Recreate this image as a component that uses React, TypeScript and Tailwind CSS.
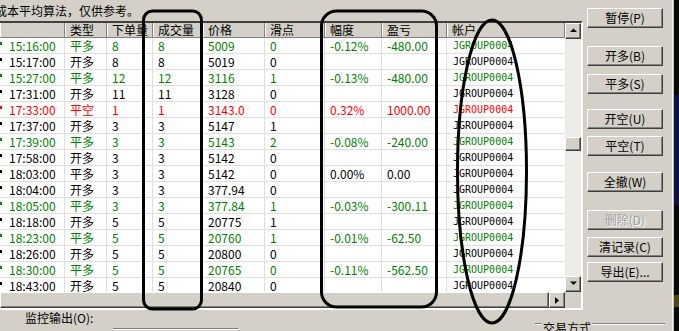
import React from 'react';

type Tone = 'g' | 'k' | 'r';

interface Trade {
  time: string;
  kind: string;
  ordered: string;
  filled: string;
  price: string;
  slip: string;
  pct: string;
  pnl: string;
  tone: Tone;
}

const trades: Trade[] = [
  { time: '15:16:00', kind: '平多', ordered: '8', filled: '8', price: '5009', slip: '0', pct: '-0.12%', pnl: '-480.00', tone: 'g' },
  { time: '15:17:00', kind: '开多', ordered: '8', filled: '8', price: '5019', slip: '0', pct: '', pnl: '', tone: 'k' },
  { time: '15:27:00', kind: '平多', ordered: '12', filled: '12', price: '3116', slip: '1', pct: '-0.13%', pnl: '-480.00', tone: 'g' },
  { time: '17:31:00', kind: '开多', ordered: '11', filled: '11', price: '3128', slip: '0', pct: '', pnl: '', tone: 'k' },
  { time: '17:33:00', kind: '平空', ordered: '1', filled: '1', price: '3143.0', slip: '0', pct: '0.32%', pnl: '1000.00', tone: 'r' },
  { time: '17:37:00', kind: '开多', ordered: '3', filled: '3', price: '5147', slip: '1', pct: '', pnl: '', tone: 'k' },
  { time: '17:39:00', kind: '平多', ordered: '3', filled: '3', price: '5143', slip: '2', pct: '-0.08%', pnl: '-240.00', tone: 'g' },
  { time: '17:58:00', kind: '开多', ordered: '3', filled: '3', price: '5142', slip: '0', pct: '', pnl: '', tone: 'k' },
  { time: '18:03:00', kind: '平多', ordered: '3', filled: '3', price: '5142', slip: '0', pct: '0.00%', pnl: '0.00', tone: 'k' },
  { time: '18:04:00', kind: '开多', ordered: '3', filled: '3', price: '377.94', slip: '0', pct: '', pnl: '', tone: 'k' },
  { time: '18:05:00', kind: '平多', ordered: '3', filled: '3', price: '377.84', slip: '1', pct: '-0.03%', pnl: '-300.11', tone: 'g' },
  { time: '18:18:00', kind: '开多', ordered: '5', filled: '5', price: '20775', slip: '1', pct: '', pnl: '', tone: 'k' },
  { time: '18:23:00', kind: '平多', ordered: '5', filled: '5', price: '20760', slip: '1', pct: '-0.01%', pnl: '-62.50', tone: 'g' },
  { time: '18:26:00', kind: '开多', ordered: '5', filled: '5', price: '20800', slip: '0', pct: '', pnl: '', tone: 'k' },
  { time: '18:30:00', kind: '平多', ordered: '5', filled: '5', price: '20765', slip: '0', pct: '-0.11%', pnl: '-562.50', tone: 'g' },
  { time: '18:43:00', kind: '开多', ordered: '5', filled: '5', price: '20840', slip: '0', pct: '', pnl: '', tone: 'k' },
];

const toneClass: Record<Tone, string> = {
  g: 'text-[#008000]',
  k: 'text-black',
  r: 'text-[#ff0000]',
};

// column widths: time, 类型, 下单量, 成交量, 价格, 滑点, 幅度, 盈亏, 帐户
const colW = ['w-[65px]', 'w-[42px]', 'w-[46px]', 'w-[50px]', 'w-[62px]', 'w-[60px]', 'w-[57px]', 'w-[65px]', 'w-[118px]'];
const headers = ['', '类型', '下单量', '成交量', '价格', '滑点', '幅度', '盈亏', '帐户'];

const raised =
  'bg-[#d4d0c8] border border-t-white border-l-white border-r-[#404040] border-b-[#404040] shadow-[inset_-1px_-1px_0_#808080]';

function Arrow({ dir }: { dir: 'up' | 'down' | 'right' }) {
  const pts = dir === 'up' ? '0,4 7,4 3.5,0.5' : dir === 'down' ? '0,0.5 7,0.5 3.5,4' : '1,0 5,3.5 1,7';
  return (
    <svg width="7" height="7" viewBox="0 0 7 7" className="block">
      <polygon points={pts} fill="#000" />
    </svg>
  );
}

function Btn({ label, mt, disabled }: { label: string; mt: string; disabled?: boolean }) {
  return (
    <div className={`${mt} h-[20px] w-[76px] flex items-center justify-center ${raised}`}>
      <span
        className={`text-[12px] leading-[14px] ${disabled ? 'text-[#a0a0a0] [text-shadow:1px_1px_0_#ffffff]' : 'text-black'}`}
      >
        {label}
      </span>
    </div>
  );
}

export default function App() {
  return (
    <div className="relative w-[679px] h-[331px] overflow-hidden bg-[#d4d0c8] flex font-['Noto_Sans_CJK_SC',sans-serif] text-[12px] text-black">
      <div className="w-[672px] flex flex-col">
        <div className="h-[310px] flex">
          {/* left: note + list view */}
          <div className="w-[583px] flex flex-col">
            <div className="h-[21px] pt-[4px] ml-[-5px] leading-[14px] whitespace-nowrap">成本平均算法，仅供参考。</div>

            <div className="h-[289px] flex flex-col border-t-2 border-t-[#404040] border-r-2 border-r-white border-b-2 border-b-white">
              <div className="h-[269px] flex">
                <div className="w-[565px] flex flex-col overflow-hidden bg-white">
                  <div className="h-[15px] flex shrink-0 bg-[#d4d0c8] border-b border-b-[#808080]">
                    {headers.map((h, i) => (
                      <div
                        key={i}
                        className={`${colW[i]} shrink-0 pl-[5px] leading-[14px] whitespace-nowrap overflow-hidden border-r border-r-[#808080] shadow-[inset_1px_0_0_#ffffff]`}
                      >
                        {h}
                      </div>
                    ))}
                  </div>
                  {trades.map((t, r) => {
                    const cells = [t.kind, t.ordered, t.filled, t.price, t.slip, t.pct, t.pnl];
                    return (
                      <div key={r} className={`h-[16px] flex shrink-0 ${toneClass[t.tone]}`}>
                        <div className={`${colW[0]} shrink-0 flex items-center border-r border-b border-[#dedede]`}>
                          <span className="w-[2px] h-[3px] bg-current mb-[5px]" />
                          <span className="ml-[7px] leading-[15px] whitespace-nowrap">{t.time}</span>
                        </div>
                        {cells.map((c, i) => (
                          <div
                            key={i}
                            className={`${colW[i + 1]} shrink-0 pl-[5px] leading-[15px] whitespace-nowrap overflow-hidden border-r border-b border-[#dedede]`}
                          >
                            {c}
                          </div>
                        ))}
                        <div className={`${colW[8]} shrink-0 pl-[6px] font-['DejaVu_Sans_Mono',monospace] text-[10px] leading-[15px] whitespace-nowrap border-b border-[#dedede]`}>
                          JGROUP0004
                        </div>
                      </div>
                    );
                  })}
                </div>

                {/* vertical scrollbar */}
                <div className="w-[16px] flex flex-col bg-[#ecebe8]">
                  <div className={`h-[16px] flex items-center justify-center ${raised}`}>
                    <Arrow dir="up" />
                  </div>
                  <div className="h-[98px]" />
                  <div className={`h-[14px] ${raised}`} />
                  <div className="flex-1" />
                  <div className={`h-[16px] flex items-center justify-center ${raised}`}>
                    <Arrow dir="down" />
                  </div>
                </div>
              </div>

              {/* horizontal scrollbar */}
              <div className="h-[16px] flex">
                <div className={`w-[549px] ${raised}`} />
                <div className={`w-[16px] flex items-center justify-center ${raised}`}>
                  <Arrow dir="right" />
                </div>
                <div className="w-[16px] bg-[#d4d0c8]" />
              </div>
            </div>
          </div>

          {/* right: buttons */}
          <div className="pl-[4px] flex flex-col">
            <Btn label="暂停(P)" mt="mt-[8px]" />
            <Btn label="开多(B)" mt="mt-[18px]" />
            <Btn label="平多(S)" mt="mt-[8px]" />
            <Btn label="开空(U)" mt="mt-[15px]" />
            <Btn label="平空(T)" mt="mt-[7px]" />
            <Btn label="全撤(W)" mt="mt-[16px]" />
            <Btn label="删除(D)" mt="mt-[18px]" disabled />
            <Btn label="清记录(C)" mt="mt-[7px]" />
            <Btn label="导出(E)..." mt="mt-[5px]" />
          </div>
        </div>

        {/* bottom row */}
        <div className="h-[21px] flex">
          <div className="w-[535px] flex">
            <span className="pl-[25px] leading-[16px] whitespace-nowrap">监控输出(O):</span>
            <div className="ml-[20px] mt-[18px] w-[125px] h-[2px] border-t border-t-[#808080] border-b border-b-white" />
          </div>
          <div className="w-[130px] flex pt-[10px]">
            <div className="w-[7px] h-[2px] mt-[3px] border-t border-t-[#808080] border-b border-b-white" />
            <span className="px-[1px] leading-[16px] whitespace-nowrap">交易方式</span>
            <div className="flex-1 h-[2px] mt-[3px] border-t border-t-[#808080] border-b border-b-white" />
          </div>
        </div>
      </div>

      {/* edge of the neighbouring window */}
      <div className="w-[7px] flex">
        <div className="w-[1px] bg-[#f4f4f4]" />
        <div className="w-[1px] bg-[#bdbab2]" />
        <div className="flex-1 flex flex-col bg-[#0a0a0a]">
          <div className="h-[95px]" />
          <div className="h-[110px] bg-[#0b1440]" />
          <div className="h-[90px]" />
          <div className="h-[12px] bg-[#4d4a10]" />
        </div>
      </div>

      {/* hand-drawn annotations */}
      <svg className="absolute inset-0 pointer-events-none" width="679" height="331" viewBox="0 0 679 331">
        <rect x="143.5" y="11" width="58" height="298" rx="9" fill="none" stroke="#000" strokeWidth="3" />
        <rect x="321.5" y="11" width="115" height="296" rx="15" fill="none" stroke="#000" strokeWidth="3" />
        <ellipse cx="492" cy="171.5" rx="34.5" ry="151.5" fill="none" stroke="#000" strokeWidth="3" />
      </svg>
    </div>
  );
}
